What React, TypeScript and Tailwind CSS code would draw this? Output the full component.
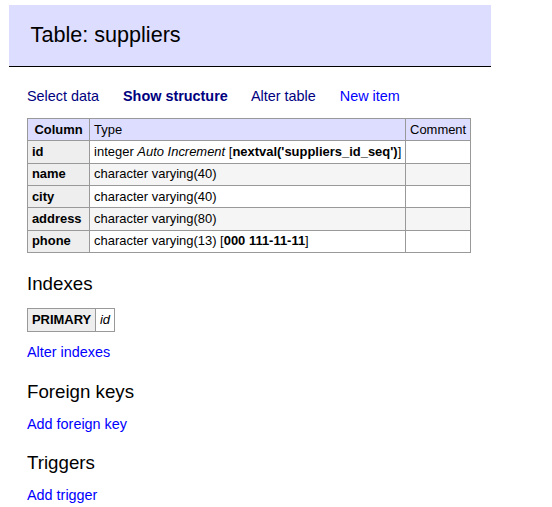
const rows = [
  { name: "id", type: "id" },
  { name: "name", type: "character varying(40)" },
  { name: "city", type: "character varying(40)" },
  { name: "address", type: "character varying(80)" },
  { name: "phone", type: "phone" },
];

function TypeCell({ type }: { type: string }) {
  if (type === "id") {
    return (
      <>
        integer <i>Auto Increment</i> [<b>nextval('suppliers_id_seq')</b>]
      </>
    );
  }
  if (type === "phone") {
    return (
      <>
        character varying(13) [<b>000 111-11-11</b>]
      </>
    );
  }
  return <>{type}</>;
}

export default function App() {
  const cell = "border border-[#999] px-[3.9px] py-[2.6px] text-left align-top";
  return (
    <div className="min-h-screen bg-white pt-[5px] pl-[27px] font-['Liberation_Sans',Arial,sans-serif] text-[14.4px] leading-[1.25] text-black">
      {/* Page title */}
      <h2 className="ml-[-18px] mb-[20px] w-[482px] border-b border-black bg-[#ddf] px-[21.6px] py-[17px] text-[21.6px] font-normal leading-[1.25]">
        Table: suppliers
      </h2>

      {/* Links */}
      <p>
        <a href="#" className="mr-[20px] text-[#000080]">Select data</a>{" "}
        <a href="#" className="mr-[20px] font-bold text-[#000080]">Show structure</a>{" "}
        <a href="#" className="mr-[20px] text-[#000080]">Alter table</a>{" "}
        <a href="#" className="mr-[20px] text-[#0000ff]">New item</a>
      </p>

      {/* Structure */}
      <table className="mt-[12.96px] border-collapse text-[12.96px] leading-[1.25]">
        <thead>
          <tr className="bg-[#ddf]">
            <th className="border border-[#999] px-[6.5px] py-[2.6px] text-center font-bold">Column</th>
            <td className={cell}>Type</td>
            <td className={cell}>Comment</td>
          </tr>
        </thead>
        <tbody>
          {rows.map((r, i) => (
            <tr key={r.name} className={i % 2 === 1 ? "bg-[#f5f5f5]" : "bg-white"}>
              <th className={`${cell} bg-[#eee] font-bold`}>{r.name}</th>
              <td className={cell}>
                <TypeCell type={r.type} />
              </td>
              <td className={cell}></td>
            </tr>
          ))}
        </tbody>
      </table>

      {/* Indexes */}
      <h3 className="mt-[18.72px] text-[18.72px] font-normal leading-[1.25]">Indexes</h3>
      <table className="mt-[12.96px] border-collapse text-[12.96px] leading-[1.25]">
        <tbody>
          <tr>
            <th className={`${cell} bg-[#eee] font-bold`}>PRIMARY</th>
            <td className={cell}>
              <i>id</i>
            </td>
          </tr>
        </tbody>
      </table>
      <p className="mt-[11.52px]">
        <a href="#" className="text-[#0000ff]">Alter indexes</a>
      </p>

      {/* Foreign keys */}
      <h3 className="mt-[18.72px] text-[18.72px] font-normal leading-[1.25]">Foreign keys</h3>
      <p className="mt-[11.52px]">
        <a href="#" className="text-[#0000ff]">Add foreign key</a>
      </p>

      {/* Triggers */}
      <h3 className="mt-[18.72px] text-[18.72px] font-normal leading-[1.25]">Triggers</h3>
      <p className="mt-[11.52px]">
        <a href="#" className="text-[#0000ff]">Add trigger</a>
      </p>
    </div>
  );
}
